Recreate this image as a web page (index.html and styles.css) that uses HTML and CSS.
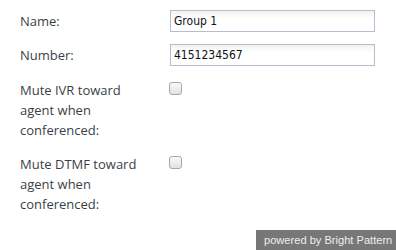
FILE: index.html
```html
<!DOCTYPE html>
<html lang="en">
  <head>
    <meta charset="UTF-8" />
    <title>Group</title>
    <link rel="stylesheet" href="styles.css">
  </head>
  <body>
    <div class="form">
      <div class="row">
        <label class="label" for="name">Name:</label>
        <input class="field" type="text" id="name" value="Group 1" />
      </div>
      <div class="row">
        <label class="label" for="number">Number:</label>
        <input class="field" type="text" id="number" value="4151234567" />
      </div>
      <div class="row check-row">
        <label class="label" for="muteIvr">Mute IVR toward agent when conferenced:</label>
        <input class="check" type="checkbox" id="muteIvr" />
      </div>
      <div class="row check-row">
        <label class="label" for="muteDtmf">Mute DTMF toward agent when conferenced:</label>
        <input class="check" type="checkbox" id="muteDtmf" />
      </div>
    </div>
    <div class="powered">powered by Bright Pattern</div>
  </body>
</html>
```

FILE: styles.css
```css
html,
body {
  margin: 0;
  height: 100%;
}
body {
  font-family: "Segoe UI", "Open Sans", "DejaVu Sans", sans-serif;
  background: #fff;
  position: relative;
  overflow: hidden;
}
.form {
  padding: 10px 0 0 20px;
  display: flex;
  flex-direction: column;
  gap: 12px;
}
.row {
  display: flex;
  align-items: flex-start;
}
.label {
  width: 150px;
  font-size: 13px;
  line-height: 22px;
  color: #3a3f47;
}
.check-row {
  padding-top: 2px;
}
.check-row .label {
  line-height: 20px;
  width: 130px;
  margin-right: 20px;
}
.field {
  box-sizing: border-box;
  width: 205px;
  height: 22px;
  margin: 0;
  padding: 0 3px;
  border: 1px solid #b9bccf;
  background: linear-gradient(#f1f3f3, #fff 8px);
  font-family: Tahoma, "DejaVu Sans Condensed", "DejaVu Sans", sans-serif;
  font-size: 12px;
  color: #111;
  outline: none;
}
.check {
  appearance: none;
  -webkit-appearance: none;
  box-sizing: border-box;
  width: 13px;
  height: 13px;
  margin: 2px 0 0 -1px;
  border: 1px solid #a8a8a8;
  border-radius: 3px;
  background: linear-gradient(#fafafa, #e2e2e2);
}
.powered {
  position: absolute;
  right: 0;
  bottom: 0;
  width: 140px;
  height: 20px;
  box-sizing: border-box;
  padding-left: 8px;
  background: #777;
  color: #eee;
  font-family: "Liberation Sans", Arial, sans-serif;
  font-size: 11.1px;
  line-height: 20px;
  white-space: nowrap;
  overflow: hidden;
}
```
